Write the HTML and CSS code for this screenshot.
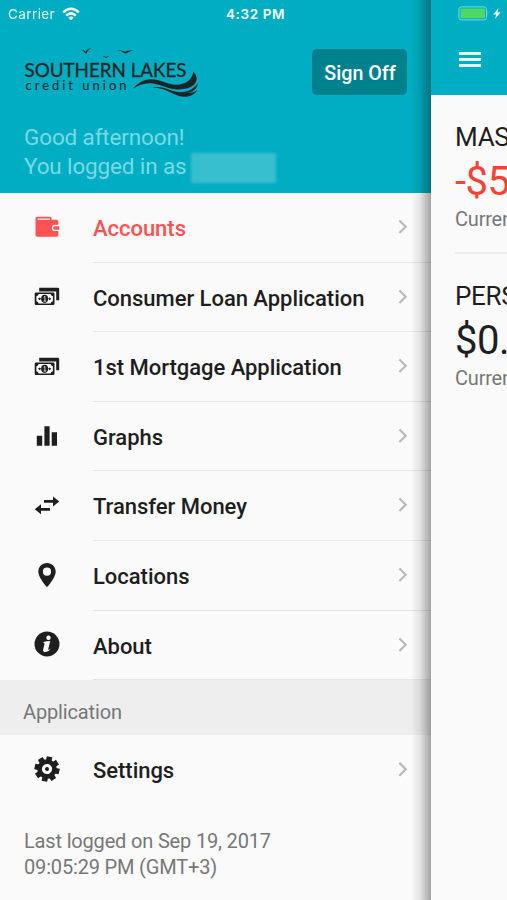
FILE: index.html
```html
<!DOCTYPE html>
<html lang="en">
<head>
<meta charset="utf-8">
<title>Southern Lakes Credit Union</title>
<link rel="stylesheet" href="styles.css">
</head>
<body>
<svg class="defs" aria-hidden="true">
  <symbol id="chevron" viewBox="0 0 10 16"><path d="M1.3 1.6 7.8 8 1.3 14.4" fill="none" stroke="currentColor" stroke-width="2.2"/></symbol>
  <symbol id="cash" viewBox="0 0 26 20">
    <path d="M5.2.8h18.6q1.4 0 1.4 1.400v11h-3V4.400H5.200z"/>
    <path fill-rule="evenodd" d="M2 5.500h17.200q1.300 0 1.300 1.300v10q0 1.300-1.300 1.300H2Q.7 18.100.7 16.800v-10Q.7 5.500 2 5.500zM4.600 7.100Q4.400 9 2.400 9.300v5q2 .3 2.200 2.200h12q.2-1.900 2.300-2.200v-5q-2-.3-2.300-2.200z"/>
    <ellipse cx="10.600" cy="11.800" rx="3.500" ry="4.100"/>
    <path d="M4 11.800 5.700 10.400 7.200 11.800 5.700 13.200zM14.100 11.800l1.500-1.400 1.700 1.400-1.700 1.400z"/>
    <path d="M9.700 10.200l1.200-.7v4.600M9.500 14.100h2.700" fill="none" stroke="#fafafa" stroke-width=".8"/>
  </symbol>
</svg>
<div class="screen">
  <aside class="drawer">
    <header class="drawer-head">
      <div class="status">
        <span class="carrier">Carrier</span>
        <svg class="wifi" viewBox="0 0 18 14"><g fill="none" stroke="#fff" stroke-width="2.500"><path d="M1.200 5.300Q9-1.900 16.800 5.300"/><path d="M4.200 8.600Q9 4.100 13.800 8.600"/></g><path d="M6.300 10.500Q9 8.300 11.700 10.500L9 13.300z" fill="#fff"/></svg>
        <span class="clock">4:32 PM</span>
      </div>
      <div class="brand">
        <svg class="logo" viewBox="0 0 176 52">
          <text class="logo-name" x=".5" y="29.500" textLength="162" lengthAdjust="spacingAndGlyphs">SOUTHERN LAKES</text>
          <text class="logo-sub" x="1.500" y="43" textLength="101" lengthAdjust="spacing">credit union</text>
          <path d="M57 2.800q3.200-.2 4.400 1.900Q63.500 1.700 67 1q-3.200 2.300-4.600 5.500-1.300-.1-2-1.600-1-1.800-3.400-2.100zM93 3.300q4.800-.7 8 1.500 3.400-1.800 8.600-1.100-4.600.4-7.400 2.700-1.200.4-2.200-.6-2.800-2.200-7-2.500zM78.500 9q2.500-.2 3.400 1Q83 8.900 85.200 9q-2.200.7-3 2.100-.7.100-1.100-.6Q80.200 9.300 78.500 9z"/>
          <path d="M109 41.700C113 37 119 32.500 126 32.300c11-.2 17 5.400 26 5.500 9.500 0 16.500-5.300 17.300-13.300 3.800 3.500 4.500 8.500 1.700 12-4 5-12 6.500-20 5.700-9-.9-16-5.600-25-6-6-.2-12 2.300-17 5.500z"/>
          <path d="M128.500 40.300c7-.7 12.500.7 17.500 2.800 9 3.500 20.500 3.500 27.700-6.800.2 5.500-5.700 9.300-11 9.700 4 .2 8-.7 11-3.500-3 5.500-8.500 7.700-14.500 7.200-6-.5-10.500-3.200-15.700-5.700-5-2.300-10-3.200-15-3.700z"/>
        </svg>
        <button class="sign-off">Sign Off</button>
      </div>
      <p class="greeting">Good afternoon!<br>You logged in as <span class="user"></span></p>
    </header>
    <nav class="menu">
      <a class="item active"><svg class="icon" viewBox="0 0 26 26"><path fill-rule="evenodd" d="M3.200 2.700H16q1.500 0 1.500 1.500v1.500h5.200q1.700 0 1.700 1.700v3.400h-3.600q-2.900 0-2.900 3.100t2.900 3.100h3.600v4q0 1.700-1.700 1.700H3.200q-1.700 0-1.700-1.700V4.400q0-1.700 1.700-1.700zM3.600 4.400v1.300H16V4.400z"/><path d="M20.800 12.200h4.400v3.500h-4.400q-1.600 0-1.600-1.700t1.600-1.800z"/></svg><span class="label">Accounts</span><svg class="chev"><use href="#chevron"/></svg></a>
      <a class="item"><svg class="icon cash"><use href="#cash"/></svg><span class="label">Consumer Loan Application</span><svg class="chev"><use href="#chevron"/></svg></a>
      <a class="item"><svg class="icon cash"><use href="#cash"/></svg><span class="label">1st Mortgage Application</span><svg class="chev"><use href="#chevron"/></svg></a>
      <a class="item"><svg class="icon" viewBox="0 0 26 26"><path d="M2.800 12.800h5.400v10H2.800zM10.400 3.200h5.200v19.600h-5.200zM17.700 9.200H23v13.600h-5.300z"/></svg><span class="label">Graphs</span><svg class="chev"><use href="#chevron"/></svg></a>
      <a class="item"><svg class="icon" viewBox="0 0 26 26"><path d="M10 8h9V4.500l6.300 5-6.300 5v-3.700h-9zM16 16v2.800H7v3.500l-6.300-5 6.300-5V16z"/></svg><span class="label">Transfer Money</span><svg class="chev"><use href="#chevron"/></svg></a>
      <a class="item"><svg class="icon" viewBox="0 0 26 26"><path fill-rule="evenodd" d="M13 1c5 0 8.700 3.800 8.700 8.700C21.700 15.600 13 25.200 13 25.200S4.300 15.600 4.300 9.700C4.300 4.800 8 1 13 1zm0 4.600a4.100 4.100 0 1 0 0 8.200 4.100 4.100 0 0 0 0-8.200z"/></svg><span class="label">Locations</span><svg class="chev"><use href="#chevron"/></svg></a>
      <a class="item"><svg class="icon" viewBox="0 0 26 26"><circle cx="13" cy="13" r="12.500"/><circle cx="14.500" cy="6.700" r="2.200" fill="#fafafa"/><path d="M9.500 10.900q3-1 6.700-1l-2 8.300q-.3 1.200 2.300-.1-1.800 3-4.900 3-3-.1-2.400-2.900l1.300-5.300q.2-1-1-1z" fill="#fafafa"/></svg><span class="label">About</span><svg class="chev"><use href="#chevron"/></svg></a>
    </nav>
    <h2 class="section">Application</h2>
    <nav class="menu">
      <a class="item last"><svg class="icon" viewBox="-13 -13 26 26"><g transform="rotate(12)"><circle r="7.400" fill="none" stroke="currentColor" stroke-width="4.600"/><circle r="2"/><g id="teeth"><path id="tooth" d="M-2.800-8.500V-12.500H2.800V-8.500z"/><use href="#tooth" transform="rotate(45)"/><use href="#tooth" transform="rotate(90)"/><use href="#tooth" transform="rotate(135)"/></g><use href="#teeth" transform="rotate(180)"/></g></svg><span class="label">Settings</span><svg class="chev"><use href="#chevron"/></svg></a>
    </nav>
    <p class="last-login">Last logged on Sep 19, 2017<br>09:05:29 PM (GMT+3)</p>
    <div class="shade"></div>
  </aside>
  <main class="page">
    <header class="page-head">
      <div class="power"><svg viewBox="0 0 44 16"><rect x=".9" y=".9" width="27.600" height="13" rx="2.500" fill="none" stroke="#83d5df" stroke-width="1"/><rect x="2.500" y="2.500" width="24.500" height="9.800" rx=".8" fill="#4cd964"/><path d="M29.700 5v4.800q1.500-2.400 0-4.800z" fill="#83d5df"/><path d="M40.600 2 35.300 8.400h3L37 13l5.500-6.500h-3.100z" fill="#fff"/></svg></div>
      <div class="burger"><i></i><i></i><i></i></div>
    </header>
    <section class="account"><h3>MAS</h3><strong class="neg">-$5</strong><p>Curren</p></section>
    <section class="account second"><h3>PERS</h3><strong>$0.</strong><p>Curren</p></section>
  </main>
</div>
</body>
</html>
```
FILE: styles.css
```css
* { box-sizing: border-box; }
body { margin: 0; font-family: Roboto, "Liberation Sans", sans-serif; background: #fafafa; color: #1e1e1e; }
h2, h3, p { margin: 0; font-weight: 400; }
.defs { position: absolute; width: 0; height: 0; }
.screen { display: flex; width: 507px; height: 900px; overflow: hidden; }
.drawer { position: relative; flex: none; width: 431px; height: 900px; }
.drawer-head { height: 193px; background: #00adc2; }
.status { display: flex; align-items: center; height: 28px; padding-left: 8px; color: #fff; font-family: Inter, sans-serif; font-size: 13.5px; }
.carrier { width: 54px; letter-spacing: .4px; opacity: .9; }
.wifi { width: 18px; height: 14px; }
.clock { margin-left: 146px; font-weight: 600; letter-spacing: .6px; white-space: nowrap; }
.brand { display: flex; justify-content: space-between; height: 68px; padding: 19px 24px 0; }
.logo { width: 176px; height: 52px; fill: #1e2426; }
.logo-name { font: 400 19.500px Lato, sans-serif; stroke: #1e2426; stroke-width: .3px; }
.logo-sub { font: 400 13px Lato, sans-serif; }
.sign-off { width: 95px; height: 46px; margin-top: 2px; padding: 2px 0 0 1px; border: 0; border-radius: 5px; background: #00828e; color: #fff; font: 500 19.700px Roboto, sans-serif; white-space: nowrap; }
.greeting { padding: 26.500px 0 0 24px; font-size: 22.500px; letter-spacing: -.14px; line-height: 29.500px; color: #77dbe6; white-space: nowrap; }
.user { display: inline-block; width: 85px; height: 30px; margin: -8px 0 0 -1px; background: #38bfcf; filter: blur(1.500px); vertical-align: -9px; }
.item { display: flex; align-items: center; height: 69.620px; padding-left: 34px; }
.icon { flex: none; width: 26px; height: 26px; margin-top: -2px; fill: currentColor; }
.cash { height: 20px; margin-top: 0; }
.label { flex: 1; align-self: stretch; margin-left: 33px; border-bottom: 1px solid #e5e5e5; font-size: 22px; font-weight: 500; letter-spacing: -.03px; line-height: 71px; white-space: nowrap; }
.chev { align-self: stretch; width: 33px; height: auto; padding: 26px 23px 27px 0; border-bottom: 1px solid #e5e5e5; color: #b9b9b9; }
.active .icon, .active .label { color: #ff5252; }
.last .label, .last .chev { border: 0; }
.section { height: 55px; padding-left: 23px; background: #eee; color: #777; font-size: 20px; letter-spacing: -.15px; line-height: 64px; }
.last-login { padding: 23px 0 0 24px; color: #777; font-size: 20px; letter-spacing: -.17px; line-height: 26px; white-space: nowrap; }
.shade { position: absolute; top: 0; right: 0; width: 20px; height: 900px; background: linear-gradient(90deg, rgba(0,0,0,0), rgba(0,0,0,.09) 45%, rgba(0,0,0,.35)); }
.page { flex: none; width: 76px; overflow: hidden; white-space: nowrap; }
.page-head { height: 95px; background: #00adc2; padding: 6px 0 0 27px; }
.power svg { display: block; width: 44px; height: 16px; }
.burger { display: flex; flex-direction: column; gap: 3px; width: 22px; margin: 30px 0 0 1px; }
.burger i { height: 3px; background: #e8f8fa; }
.account { height: 159px; margin-left: 24px; padding-top: 26px; border-bottom: 2px solid #eee; }
.second { border: 0; }
.account h3 { font-size: 26px; letter-spacing: -.3px; line-height: 32px; }
.account strong { display: block; font-size: 40px; font-weight: 400; letter-spacing: -.5px; line-height: 57px; height: 54px; }
.account .neg { color: #f44336; }
.account p { color: #777; font-size: 20px; letter-spacing: -.2px; line-height: 24px; }
```
